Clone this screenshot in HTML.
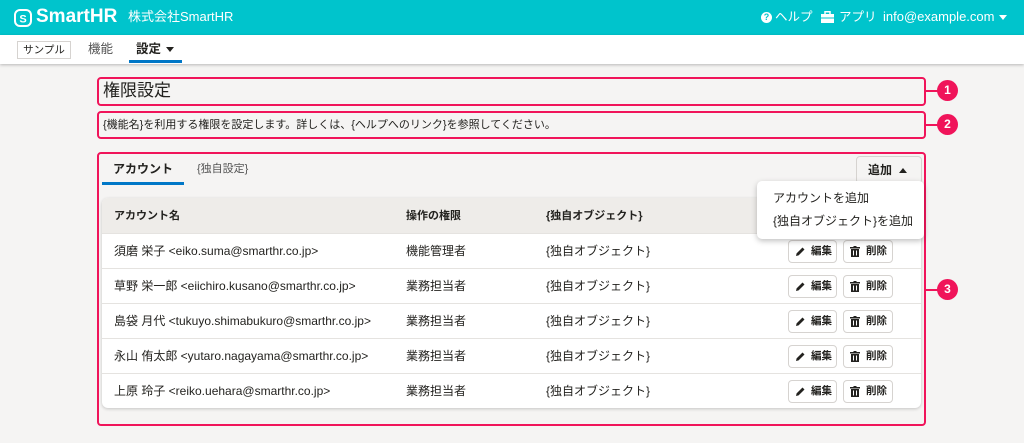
<!DOCTYPE html>
<html><head><meta charset="utf-8"><style>
*{box-sizing:border-box;margin:0;padding:0}
body{width:1024px;height:443px;background:#f5f4f3;font-family:"Liberation Sans","Noto Sans CJK JP",sans-serif;color:#23221f;position:relative;overflow:hidden;font-size:12px;line-height:20px}
.abs{position:absolute;white-space:nowrap}
.hdr{left:0;top:0;width:1024px;height:35px;background:#00c4cc;color:#fff}
.sub{left:0;top:35px;width:1024px;height:29px;background:#fff;box-shadow:0 1px 3px rgba(0,0,0,.25)}
.pk{border:2px solid #f0145a;border-radius:4px}
.circ{width:21px;height:21px;border-radius:50%;background:#f0145a;color:#fff;font-weight:bold;font-size:12px;text-align:center;line-height:21px}
.ln{height:2px;background:#f0145a}
.card{left:102px;top:198px;width:819px;height:210px;background:#fff;border-radius:6px;box-shadow:0 1px 3px rgba(0,0,0,.2);overflow:hidden}
.th{height:35px;background:#eeece9;font-size:11px;font-weight:bold;position:relative}
.tr{height:35px;border-top:1px solid #e5e3e0;position:relative;font-size:12px}
.th span,.tr span{position:absolute;top:50%;transform:translateY(-50%);white-space:nowrap}
.btn{position:absolute;top:6px;height:23px;border:1px solid #d6d3d0;border-radius:4px;background:#fff;font-size:10.5px;font-weight:bold;line-height:21px;padding-left:22px}
.btn svg{position:absolute;left:6px;top:5px}
</style></head><body>
<div class="abs hdr">
 <svg class="abs" style="left:14px;top:9px" width="18" height="18" viewBox="0 0 18 18"><rect x="1" y="1" width="16" height="16" rx="5" fill="none" stroke="#fff" stroke-width="2"/><text x="9" y="13.5" text-anchor="middle" font-size="11" font-weight="bold" fill="#fff" font-family="Liberation Sans">S</text></svg>
 <div class="abs" style="left:36px;top:5px;font-size:19px;font-weight:bold;line-height:24px">SmartHR</div>
 <div class="abs" style="left:128px;top:7px;font-size:13px">株式会社SmartHR</div>
 <div class="abs" style="left:761px;top:12px;width:11px;height:11px;border-radius:50%;background:#fff;color:#00c4cc;font-size:9px;font-weight:bold;text-align:center;line-height:11px">?</div>
 <div class="abs" style="left:775px;top:7px;font-size:12.5px">ヘルプ</div>
 <svg class="abs" style="left:821px;top:11px" width="13" height="12" viewBox="0 0 13 12"><rect x="4" y="0.75" width="5" height="3" fill="none" stroke="#fff" stroke-width="1.5"/><rect x="0" y="3" width="13" height="9" fill="#fff"/><rect x="0" y="6.5" width="13" height="1" fill="#00c4cc"/></svg>
 <div class="abs" style="left:839px;top:7px;font-size:12.5px">アプリ</div>
 <div class="abs" style="left:883px;top:7px;font-size:13px">info@example.com</div>
 <div class="abs" style="left:999px;top:15px;border:4px solid transparent;border-top:5px solid #fff"></div>
</div>
<div class="abs sub">
 <div class="abs" style="left:17px;top:6px;width:54px;height:18px;border:1px solid #d6d3d0;font-size:10.5px;text-align:center;line-height:16px">サンプル</div>
 <div class="abs" style="left:88px;top:4px;font-size:12.5px;color:#555">機能</div>
 <div class="abs" style="left:136px;top:4px;font-size:12.5px;font-weight:bold">設定</div>
 <div class="abs" style="left:166px;top:12px;border:4px solid transparent;border-top:5px solid #23221f"></div>
 <div class="abs" style="left:129px;top:25px;width:53px;height:3px;background:#0077c7"></div>
</div>
<div class="abs pk" style="left:97px;top:77px;width:829px;height:29px"></div>
<div class="abs" style="left:103px;top:81px;font-size:17px">権限設定</div>
<div class="abs ln" style="left:926px;top:90px;width:12px"></div>
<div class="abs circ" style="left:937px;top:80px">1</div>
<div class="abs pk" style="left:97px;top:111px;width:829px;height:28px"></div>
<div class="abs" style="left:103px;top:115px;font-size:11px">{機能名}を利用する権限を設定します。詳しくは、{ヘルプへのリンク}を参照してください。</div>
<div class="abs ln" style="left:926px;top:124px;width:12px"></div>
<div class="abs circ" style="left:937px;top:114px">2</div>
<div class="abs pk" style="left:97px;top:152px;width:829px;height:274px"></div>
<div class="abs ln" style="left:926px;top:289px;width:12px"></div>
<div class="abs circ" style="left:937px;top:279px">3</div>
<div class="abs" style="left:113px;top:159px;font-size:12px;font-weight:bold">アカウント</div>
<div class="abs" style="left:102px;top:182px;width:82px;height:3px;background:#0077c7"></div>
<div class="abs" style="left:197px;top:159px;font-size:11px;color:#555">{独自設定}</div>
<div class="abs" style="left:856px;top:156px;width:66px;height:28px;border:1px solid #d6d3d0;border-radius:4px;background:#f5f4f3"></div>
<div class="abs" style="left:868px;top:160px;font-size:12px;font-weight:bold">追加</div>
<div class="abs" style="left:899px;top:168px;border:4px solid transparent;border-bottom:5px solid #23221f;border-top:0"></div>
<div class="abs card">
 <div class="th"><span style="left:12px">アカウント名</span><span style="left:304px">操作の権限</span><span style="left:444px">{独自オブジェクト}</span></div>
 <div class="tr"><span style="left:12px">須磨 栄子 &lt;eiko.suma@smarthr.co.jp&gt;</span><span style="left:304px">機能管理者</span><span style="left:444px">{独自オブジェクト}</span>
  <div class="btn" style="left:686px;width:49px"><svg width="11" height="11" viewBox="0 0 11 11"><path d="M1 10l.6-2.6L7.5 1.5l2 2-5.9 5.9z" fill="#23221f"/></svg>編集</div>
  <div class="btn" style="left:741px;width:50px"><svg width="10" height="11" viewBox="0 0 10 11"><rect x="0" y="1" width="10" height="1.5" fill="#23221f"/><rect x="3.5" y="0" width="3" height="1.5" fill="#23221f"/><path d="M1 3h8v8H1z M3 4.5v5h1v-5z M6 4.5v5h1v-5z" fill="#23221f" fill-rule="evenodd"/></svg>削除</div></div>
 <div class="tr"><span style="left:12px">草野 栄一郎 &lt;eiichiro.kusano@smarthr.co.jp&gt;</span><span style="left:304px">業務担当者</span><span style="left:444px">{独自オブジェクト}</span>
  <div class="btn" style="left:686px;width:49px"><svg width="11" height="11" viewBox="0 0 11 11"><path d="M1 10l.6-2.6L7.5 1.5l2 2-5.9 5.9z" fill="#23221f"/></svg>編集</div>
  <div class="btn" style="left:741px;width:50px"><svg width="10" height="11" viewBox="0 0 10 11"><rect x="0" y="1" width="10" height="1.5" fill="#23221f"/><rect x="3.5" y="0" width="3" height="1.5" fill="#23221f"/><path d="M1 3h8v8H1z M3 4.5v5h1v-5z M6 4.5v5h1v-5z" fill="#23221f" fill-rule="evenodd"/></svg>削除</div></div>
 <div class="tr"><span style="left:12px">島袋 月代 &lt;tukuyo.shimabukuro@smarthr.co.jp&gt;</span><span style="left:304px">業務担当者</span><span style="left:444px">{独自オブジェクト}</span>
  <div class="btn" style="left:686px;width:49px"><svg width="11" height="11" viewBox="0 0 11 11"><path d="M1 10l.6-2.6L7.5 1.5l2 2-5.9 5.9z" fill="#23221f"/></svg>編集</div>
  <div class="btn" style="left:741px;width:50px"><svg width="10" height="11" viewBox="0 0 10 11"><rect x="0" y="1" width="10" height="1.5" fill="#23221f"/><rect x="3.5" y="0" width="3" height="1.5" fill="#23221f"/><path d="M1 3h8v8H1z M3 4.5v5h1v-5z M6 4.5v5h1v-5z" fill="#23221f" fill-rule="evenodd"/></svg>削除</div></div>
 <div class="tr"><span style="left:12px">永山 侑太郎 &lt;yutaro.nagayama@smarthr.co.jp&gt;</span><span style="left:304px">業務担当者</span><span style="left:444px">{独自オブジェクト}</span>
  <div class="btn" style="left:686px;width:49px"><svg width="11" height="11" viewBox="0 0 11 11"><path d="M1 10l.6-2.6L7.5 1.5l2 2-5.9 5.9z" fill="#23221f"/></svg>編集</div>
  <div class="btn" style="left:741px;width:50px"><svg width="10" height="11" viewBox="0 0 10 11"><rect x="0" y="1" width="10" height="1.5" fill="#23221f"/><rect x="3.5" y="0" width="3" height="1.5" fill="#23221f"/><path d="M1 3h8v8H1z M3 4.5v5h1v-5z M6 4.5v5h1v-5z" fill="#23221f" fill-rule="evenodd"/></svg>削除</div></div>
 <div class="tr"><span style="left:12px">上原 玲子 &lt;reiko.uehara@smarthr.co.jp&gt;</span><span style="left:304px">業務担当者</span><span style="left:444px">{独自オブジェクト}</span>
  <div class="btn" style="left:686px;width:49px"><svg width="11" height="11" viewBox="0 0 11 11"><path d="M1 10l.6-2.6L7.5 1.5l2 2-5.9 5.9z" fill="#23221f"/></svg>編集</div>
  <div class="btn" style="left:741px;width:50px"><svg width="10" height="11" viewBox="0 0 10 11"><rect x="0" y="1" width="10" height="1.5" fill="#23221f"/><rect x="3.5" y="0" width="3" height="1.5" fill="#23221f"/><path d="M1 3h8v8H1z M3 4.5v5h1v-5z M6 4.5v5h1v-5z" fill="#23221f" fill-rule="evenodd"/></svg>削除</div></div>
</div>
<div class="abs" style="left:757px;top:181px;width:167px;height:58px;background:#fff;border-radius:5px;box-shadow:0 2px 6px rgba(0,0,0,.25)">
 <div class="abs" style="left:16px;top:7px;font-size:12px">アカウントを追加</div>
 <div class="abs" style="left:16px;top:30px;font-size:12px">{独自オブジェクト}を追加</div>
</div>
</body></html>
